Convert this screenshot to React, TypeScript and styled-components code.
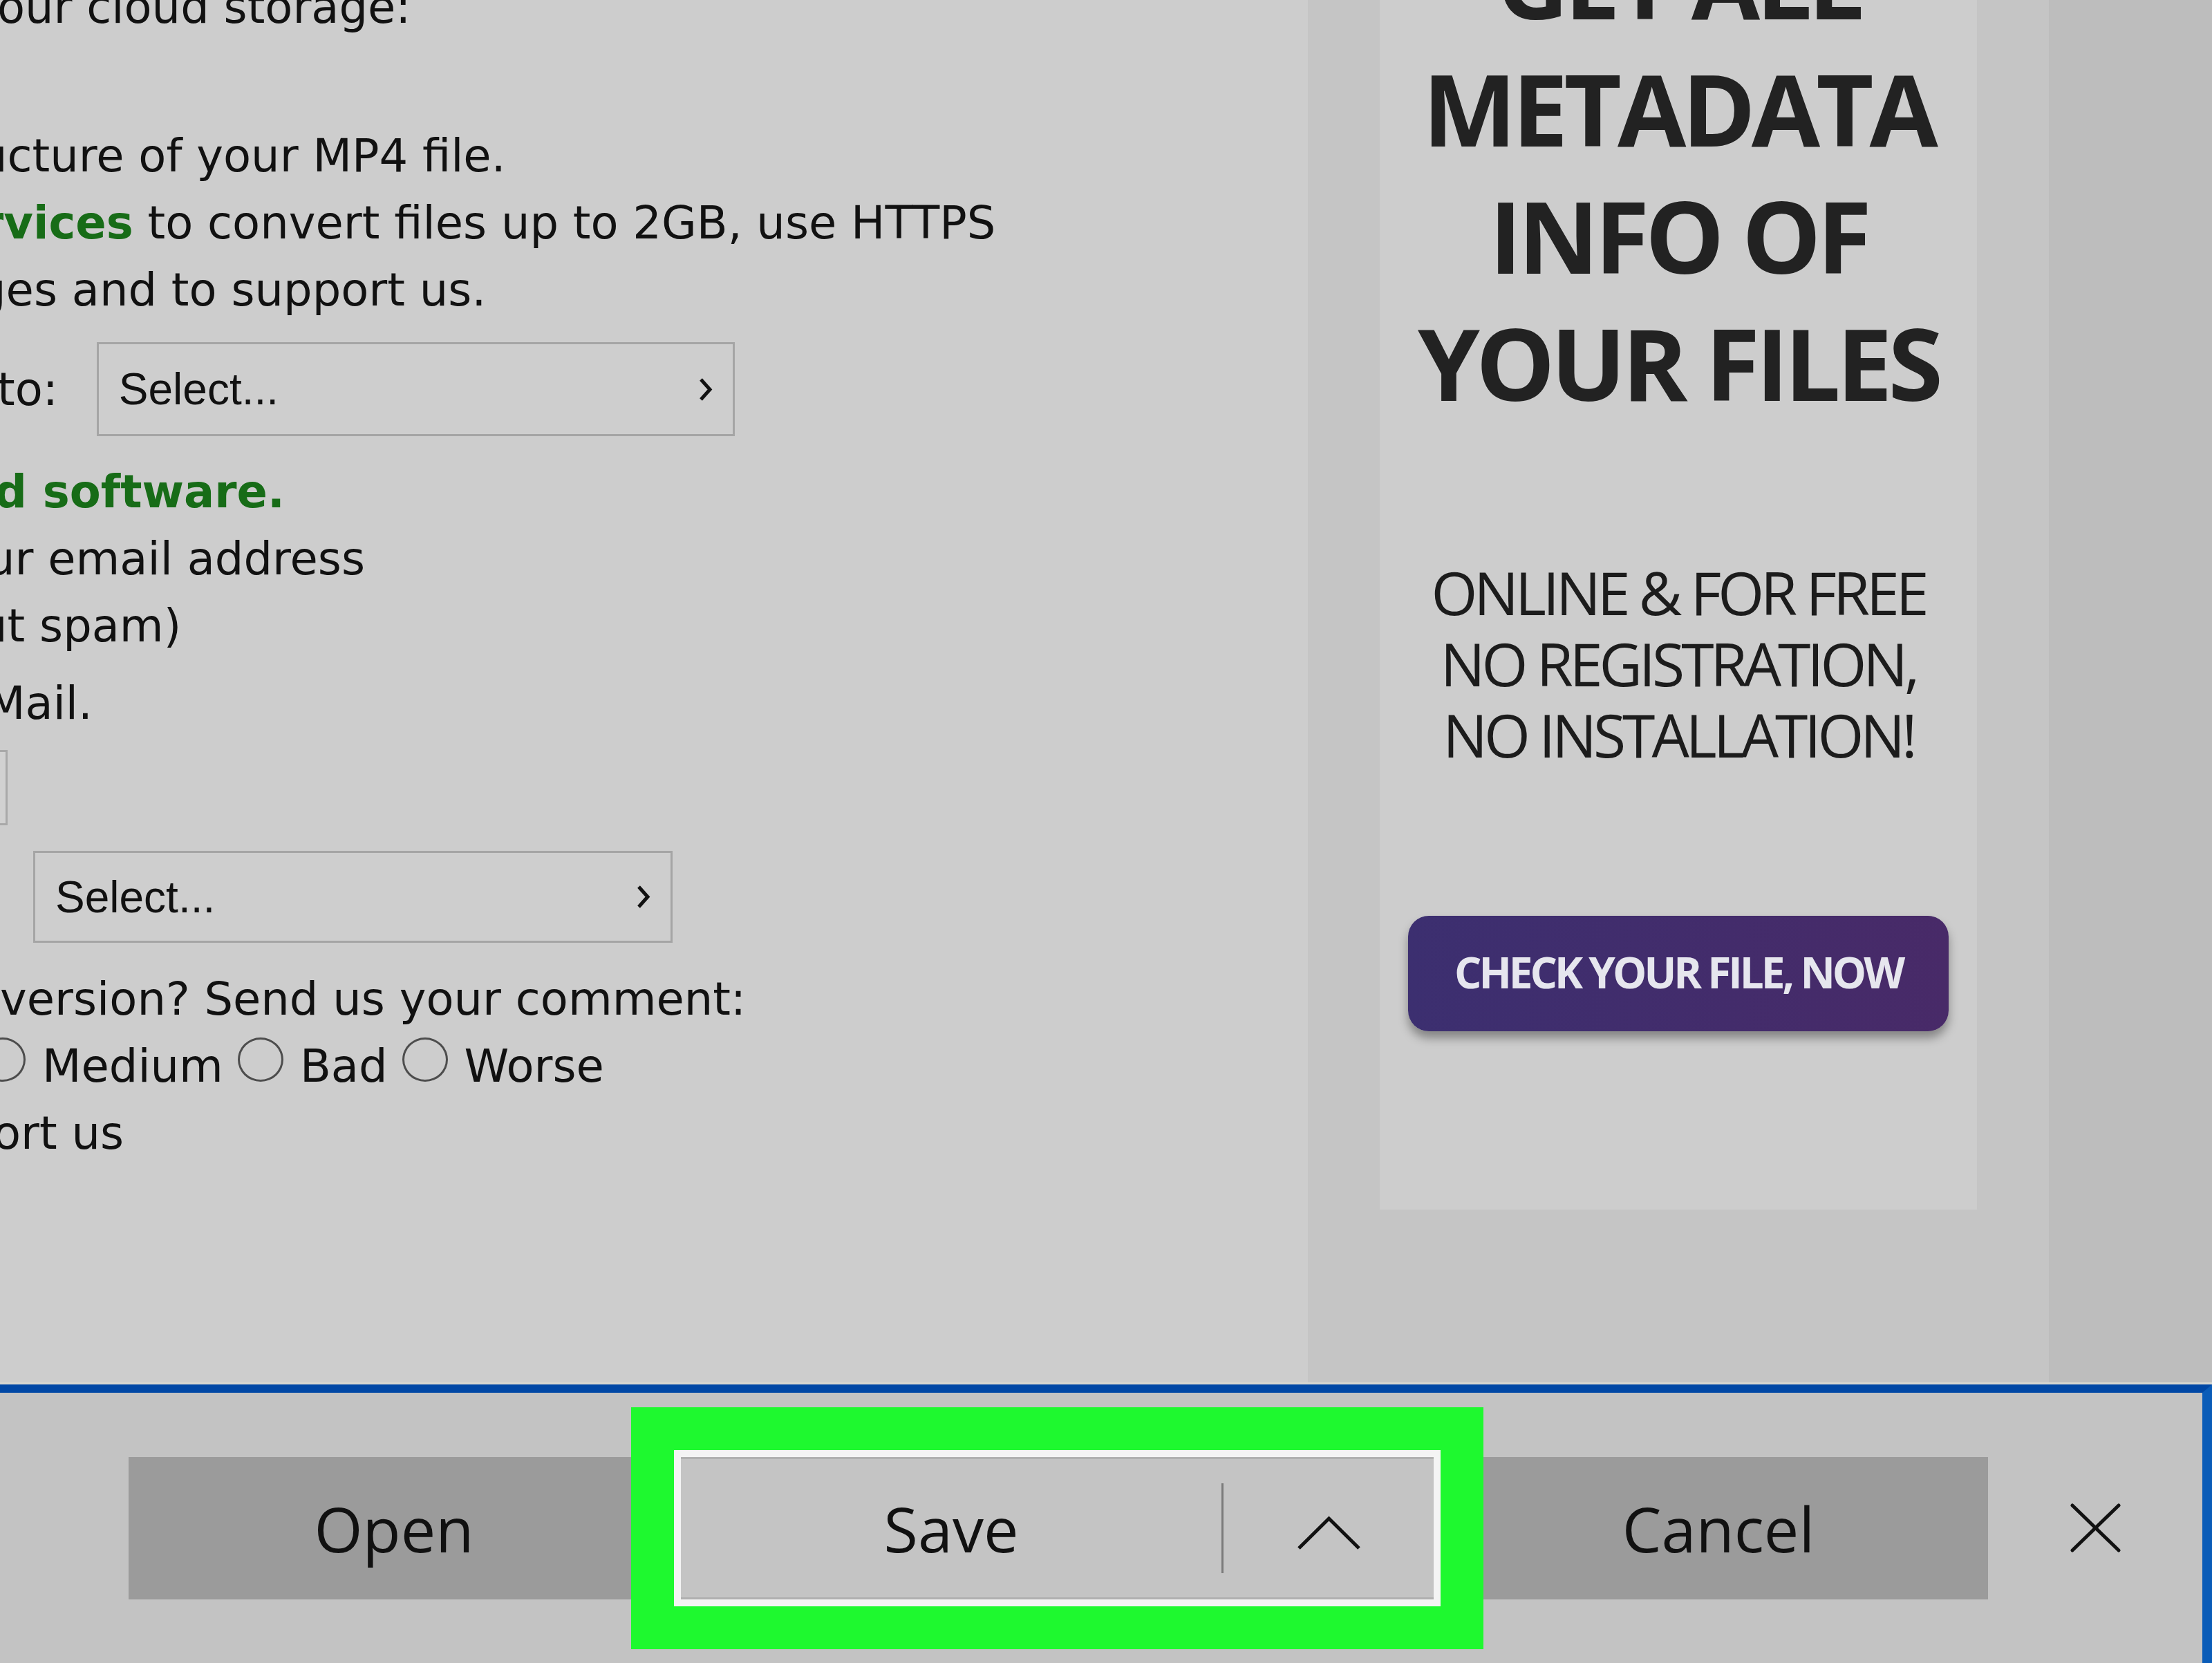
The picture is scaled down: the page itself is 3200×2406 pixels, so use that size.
import React from 'react';
import styled, { createGlobalStyle } from 'styled-components';

const GlobalStyle = createGlobalStyle`
	html,
	body {
		margin: 0;
		padding: 0;
		background: #cdcdcd;
	}
	body {
		width: 3200px;
		height: 2406px;
		overflow: hidden;
	}
`;

function App() {
	return (
		<Screen>
			<GlobalStyle />
			<Page>
				<Article>
					<Line $top={-38} $indent={-4}>
						our cloud storage:
					</Line>
					<Line $top={118} $indent={-31}>
						ucture of your MP4 file.
					</Line>
					<Line $indent={-27}>
						<Link>rvices</Link> to convert files up to 2GB, use HTTPS
					</Line>
					<Line $indent={-33}>ges and to support us.</Line>
					<SelectRow>
						<FieldLabel>to:</FieldLabel>
						<SelectBox $width={923} $height={136}>
							<span>Select...</span>
							<SelectChevron />
						</SelectBox>
					</SelectRow>
					<Line $top={32} $indent={-8}>
						<Link>d software.</Link>
					</Line>
					<Line $indent={-20}>ur email address</Line>
					<Line $indent={-31}>ut spam)</Line>
					<Line $top={15} $indent={-20}>
						Mail.
					</Line>
					<EmailInput />
					<SelectBox $width={925} $height={133} $offset={48} $top={37}>
						<span>Select...</span>
						<SelectChevron />
					</SelectBox>
					<Line $top={33}>version? Send us your comment:</Line>
					<RadioRow>
						<Radio />
						<RadioLabel>Medium</RadioLabel>
						<Radio />
						<RadioLabel>Bad</RadioLabel>
						<Radio />
						<RadioLabel>Worse</RadioLabel>
					</RadioRow>
					<Line $indent={-10}>ort us</Line>
				</Article>
				<Sidebar>
					<AdPanel>
						<Headline>
							GET ALL
							<br />
							METADATA
							<br />
							INFO OF
							<br />
							YOUR FILES
						</Headline>
						<Tagline>
							ONLINE &amp; FOR FREE
							<br />
							NO REGISTRATION,
							<br />
							NO INSTALLATION!
						</Tagline>
						<CtaButton>CHECK YOUR FILE, NOW</CtaButton>
					</AdPanel>
				</Sidebar>
				<Gutter />
			</Page>
			<DownloadBar>
				<BarButton $width={768}>Open</BarButton>
				<SaveSplit>
					<SaveLabel>Save</SaveLabel>
					<SplitDivider />
					<SaveMenu>
						<svg width="93" height="50" viewBox="0 0 93 50">
							<polyline points="3,47 46.5,4 90,47" fill="none" stroke="#111" strokeWidth="5" />
						</svg>
					</SaveMenu>
				</SaveSplit>
				<BarButton $width={780} $gap={12}>
					Cancel
				</BarButton>
				<CloseButton aria-label="Close">
					<svg width="75" height="73" viewBox="0 0 75 73">
						<path d="M4 4 L71 69 M71 4 L4 69" stroke="#111" strokeWidth="5" strokeLinecap="round" />
					</svg>
				</CloseButton>
			</DownloadBar>
		</Screen>
	);
}

function SelectChevron() {
	return (
		<svg width="23" height="39" viewBox="0 0 23 39">
			<polyline points="5,5 18,19.5 5,34" fill="none" stroke="#111" strokeWidth="5" />
		</svg>
	);
}

const Screen = styled.div`
	width: 3200px;
	height: 2406px;
	display: flex;
	flex-direction: column;
	overflow: hidden;
`;

const Page = styled.div`
	height: 2003px;
	flex-shrink: 0;
	display: flex;
	box-sizing: border-box;
	border-bottom: 3px solid #d7d7d1;
`;

const Article = styled.div`
	width: 1892px;
	flex-shrink: 0;
	overflow: hidden;
	font-family: 'DejaVu Sans', Verdana, sans-serif;
	font-size: 65.5px;
	line-height: 97px;
	color: #111;
`;

const Line = styled.p<{ $top?: number; $indent?: number }>`
	margin: ${({ $top }) => $top ?? 0}px 0 0;
	text-indent: ${({ $indent }) => $indent ?? 0}px;
	white-space: nowrap;
`;

const Link = styled.b`
	color: #176c17;
`;

const SelectRow = styled.div`
	display: flex;
	align-items: center;
	gap: 56px;
	margin-top: 27px;
`;

const FieldLabel = styled.span`
	margin-left: -4px;
`;

const SelectBox = styled.div<{ $width: number; $height: number; $offset?: number; $top?: number }>`
	width: ${({ $width }) => $width}px;
	height: ${({ $height }) => $height}px;
	margin: ${({ $top }) => $top ?? 0}px 0 0 ${({ $offset }) => $offset ?? 0}px;
	box-sizing: border-box;
	border: 3px solid #a5a5a5;
	background: #cecece;
	display: flex;
	align-items: center;
	justify-content: space-between;
	padding: 0 28px 0 29px;
	font-family: 'Liberation Sans', Arial, sans-serif;
	font-size: 64px;
	line-height: 1;
	color: #111;
`;

const EmailInput = styled.div`
	width: 400px;
	height: 109px;
	margin: 19px 0 0 -389px;
	box-sizing: border-box;
	border: 3px solid #a9a9a9;
	background: #d1d1d1;
`;

const RadioRow = styled.div`
	display: flex;
	align-items: center;
	height: 97px;
	margin-left: -29px;
	white-space: nowrap;
`;

const Radio = styled.span`
	width: 66px;
	height: 64px;
	flex-shrink: 0;
	box-sizing: border-box;
	border: 3px solid #4d4d4d;
	border-radius: 50%;
	align-self: flex-start;
	margin: 7px 24px 0 0;
`;

const RadioLabel = styled.span`
	margin-right: 21px;
`;

const Sidebar = styled.aside`
	width: 1072px;
	flex-shrink: 0;
	box-sizing: border-box;
	padding-left: 104px;
	background: #c5c5c5;
	overflow: hidden;
`;

const AdPanel = styled.div`
	width: 864px;
	height: 1750px;
	background: #cdcdcd;
	display: flex;
	flex-direction: column;
	align-items: center;
	text-align: center;
	font-family: 'Open Sans', sans-serif;
	overflow: hidden;
`;

const Headline = styled.h2`
	margin: -120px 0 0;
	font-size: 144px;
	font-weight: 700;
	line-height: 184px;
	letter-spacing: -6px;
	color: #222;
	white-space: nowrap;
`;

const Tagline = styled.p`
	margin: 189px 0 0;
	font-size: 86px;
	font-weight: 400;
	line-height: 103px;
	letter-spacing: -5px;
	color: #1c1c1c;
	white-space: nowrap;
`;

const CtaButton = styled.button`
	margin-top: 211px;
	width: 782px;
	height: 167px;
	border: none;
	border-radius: 30px;
	background: linear-gradient(90deg, #3c2f70, #482a68);
	box-shadow: 0 10px 14px rgba(0, 0, 0, 0.35);
	color: #e6e6ee;
	font-family: 'Open Sans', sans-serif;
	font-size: 62px;
	font-weight: 700;
	letter-spacing: -4px;
	white-space: nowrap;
	padding: 0 0 6px;
`;

const Gutter = styled.div`
	flex: 1;
	background: #bdbdbd;
`;

const DownloadBar = styled.div`
	flex: 1;
	display: flex;
	align-items: center;
	padding-left: 186px;
	background: #c3c3c3;
	border-top: 12px solid #0047a5;
	border-right: 14px solid #0a5cb8;
	font-family: 'Open Sans', 'Segoe UI', sans-serif;
	font-size: 90px;
	color: #111;
`;

const BarButton = styled.button<{ $width: number; $gap?: number }>`
	width: ${({ $width }) => $width}px;
	height: 206px;
	margin-left: ${({ $gap }) => $gap ?? 0}px;
	flex-shrink: 0;
	border: none;
	background: #9b9b9b;
	font: inherit;
	color: inherit;
	padding: 0;
`;

const SaveSplit = styled.div`
	position: relative;
	z-index: 1;
	width: 1109px;
	height: 226px;
	margin-left: 21px;
	flex-shrink: 0;
	box-sizing: border-box;
	border: 10px solid #f4f4f4;
	outline: 62px solid #1ef92f;
	background: #c4c4c4;
	box-shadow: inset 0 3px 0 #b0b0b0, inset 0 -3px 0 #b0b0b0;
	display: flex;
	align-items: center;
`;

const SaveLabel = styled.span`
	width: 782px;
	text-align: center;
`;

const SplitDivider = styled.span`
	width: 3px;
	height: 130px;
	background: #7b7b7b;
`;

const SaveMenu = styled.span`
	flex: 1;
	display: flex;
	justify-content: center;
	align-items: center;
	padding-top: 14px;
`;

const CloseButton = styled.button`
	flex: 1;
	height: 206px;
	display: flex;
	align-items: center;
	justify-content: center;
	border: none;
	background: none;
	padding: 0;
`;

export default App;
